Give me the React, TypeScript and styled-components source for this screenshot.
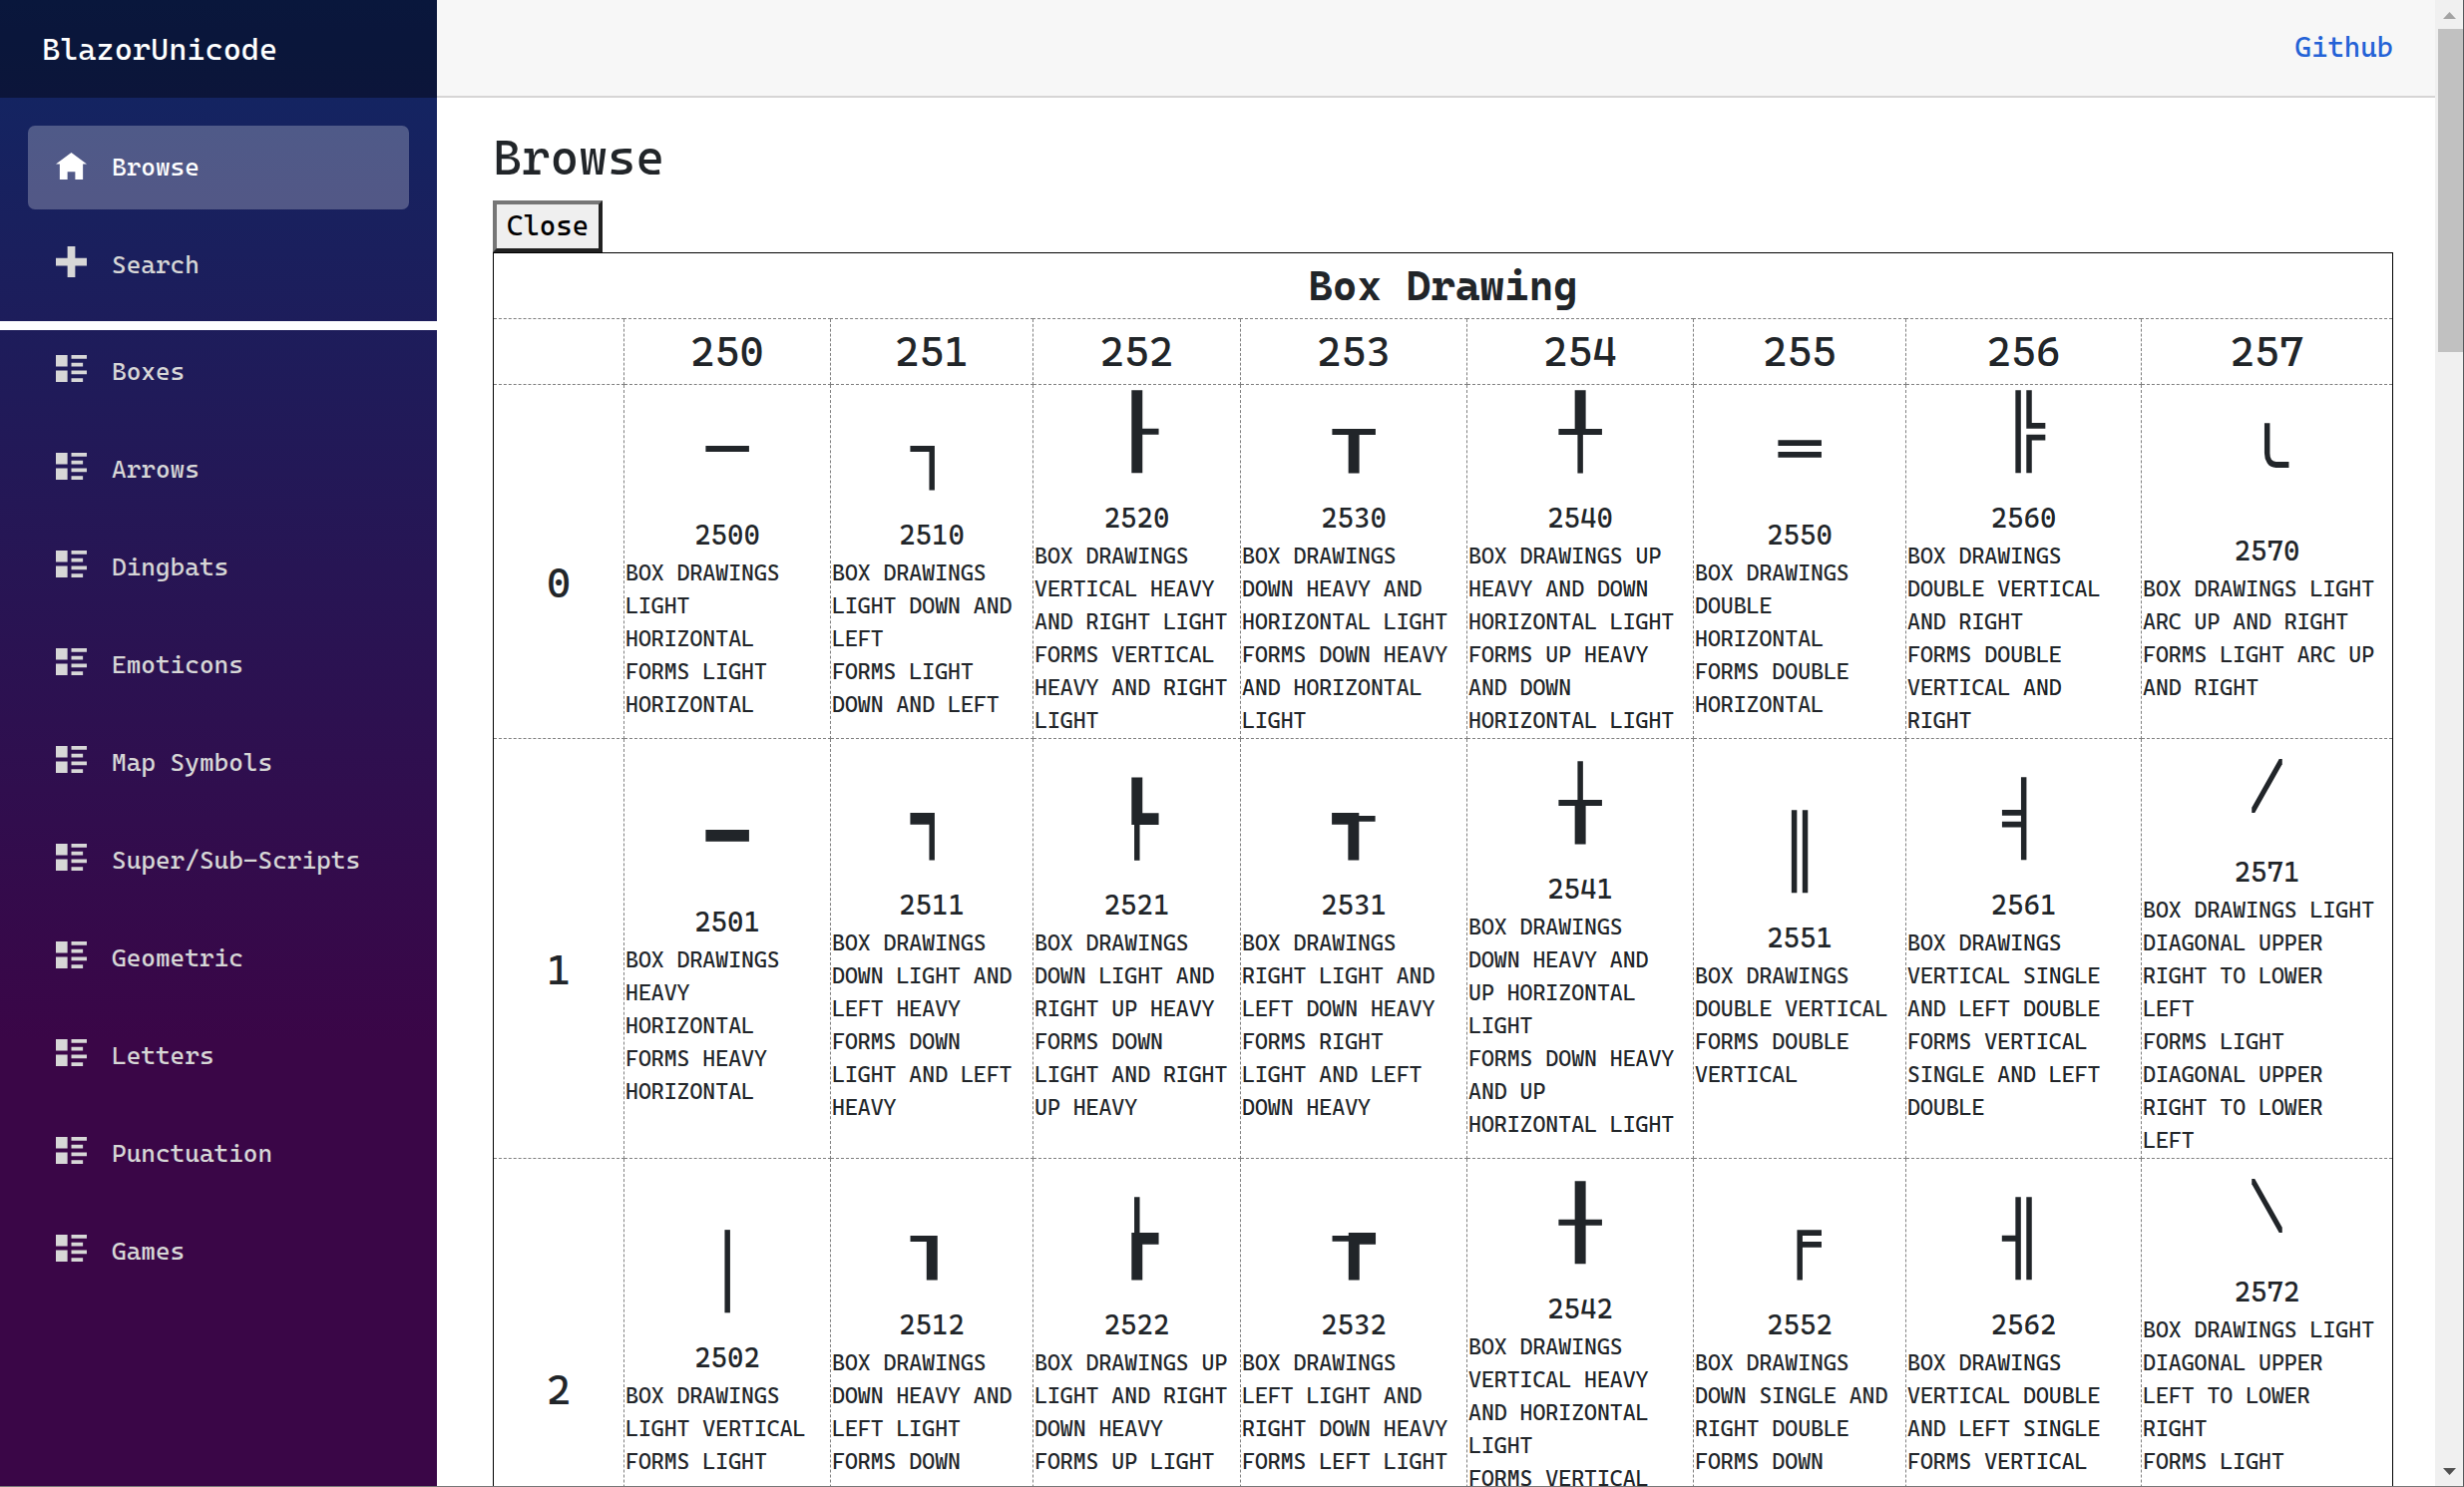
import React from "react";
import styled, { createGlobalStyle } from "styled-components";

const mono = `"Cascadia Code", "DejaVu Sans Mono", "Liberation Mono", monospace`;

const GlobalStyle = createGlobalStyle`
  *, *::before, *::after { box-sizing: border-box; }
  body {
    margin: 0;
    background: #fff;
    color: #212529;
    font-family: ${mono};
    font-size: 28px;
    font-weight: 400;
    line-height: 42px;
  }
`;

const Window = styled.div`
  display: flex;
  height: 100vh;
  overflow: hidden;
  border-right: 1px solid #56595c;
  border-bottom: 1px solid #777;
`;

const Sidebar = styled.aside`
  flex: 0 0 438px;
  background-image: linear-gradient(180deg, #102764 0%, #3a0647 70%);
`;

const Brand = styled.a`
  display: flex;
  align-items: center;
  height: 98px;
  padding: 0 42px;
  background: rgba(0, 0, 0, 0.4);
  color: #fff;
  font-size: 31px;
  text-decoration: none;
`;

const NavGroup = styled.ul`
  list-style: none;
  margin: 0;
  padding: 0 28px;
`;

const MainNav = styled(NavGroup)`
  padding-top: 28px;
  border-bottom: 9px solid #fff;
`;

const NavItem = styled.li`
  padding-bottom: 14px;
`;

const NavLink = styled.a<{ $active?: boolean }>`
  display: flex;
  align-items: center;
  height: 84px;
  padding: 0 28px;
  border-radius: 7px;
  background: ${(p) => (p.$active ? "rgba(255, 255, 255, 0.25)" : "transparent")};
  color: ${(p) => (p.$active ? "#fff" : "#d7d7d7")};
  font-size: 25px;
  text-decoration: none;
  white-space: nowrap;
`;

const Icon = styled.svg`
  flex: none;
  width: 31px;
  height: 31px;
  margin: 0 25px 7px 0;
  fill: currentColor;
`;

const Main = styled.main`
  flex: 1;
  min-width: 0;
`;

const TopBar = styled.header`
  display: flex;
  align-items: center;
  justify-content: flex-end;
  height: 98px;
  padding: 0 42px 0 56px;
  background: #f7f7f7;
  border-bottom: 2px solid #d6d5d5;
`;

const TopLink = styled.a`
  color: #2462d6;
  text-decoration: none;
`;

const Content = styled.div`
  padding: 31px 42px 0 56px;
`;

const Title = styled.h1`
  margin: 0 0 14px;
  font-size: 49px;
  font-weight: 400;
  line-height: 58px;
`;

const CloseButton = styled.button`
  display: block;
  height: 52px;
  padding: 0 10px;
  border: 4px solid;
  border-color: #767676 #212121 #212121 #767676;
  border-radius: 0;
  background: #efefef;
  color: #000;
  font: inherit;
`;

const Table = styled.table`
  width: 100%;
  table-layout: fixed;
  border-collapse: collapse;
  border: 1px solid #000;

  th, td {
    padding: 1px;
    border: 1px dashed #808080;
  }
`;

const Caption = styled.th`
  font-size: 42px;
  line-height: 63px;
`;

const ColumnHead = styled.th`
  font-size: 42px;
  font-weight: 400;
  line-height: 63px;
`;

const RowHead = styled(ColumnHead)`
  && { padding-top: 43px; }
`;

const Glyph = styled.div<{ $diagonal: boolean }>`
  height: 112px;
  font-family: ${(p) => (p.$diagonal ? mono : `"DejaVu Sans Mono", monospace`)};
  font-size: ${(p) => (p.$diagonal ? 52 : 70)}px;
  line-height: 92px;
  text-align: center;
`;

const Code = styled.div`
  text-align: center;
`;

const Name = styled.div`
  padding-right: 7px;
  font-size: 22px;
  line-height: 33px;
`;

const ScrollTrack = styled.div`
  flex: 0 0 28px;
  display: flex;
  flex-direction: column;
  align-items: center;
  background: #f0f0f0;
`;

const ScrollArrow = styled.svg<{ $color: string }>`
  flex: none;
  width: 28px;
  height: 29px;
  fill: ${(p) => p.$color};
`;

const ScrollThumb = styled.div`
  flex: none;
  width: 25px;
  height: 324px;
  margin: 0 0 auto 2px;
  background: #c1c1c1;
`;

const icons = {
  home: { box: "0 -1 8 8", d: "M4 0l-4 3h1v4h2v-2h2v2h2v-4.03l1 .03-4-3z" },
  plus: { box: "0 0 8 8", d: "M3 0v3h-3v2h3v3h2v-3h3v-2h-3v-3h-2z" },
  list: {
    box: "0 -0.5 8 8",
    d: "M0 0v3h3v-3h-3zm4 0v1h4v-1h-4zm0 2v1h3v-1h-3zm-4 2v3h3v-3h-3zm4 0v1h4v-1h-4zm0 2v1h3v-1h-3z",
  },
};

function NavEntry({ icon, label, active }: { icon: keyof typeof icons; label: string; active?: boolean }) {
  return (
    <NavItem>
      <NavLink href="#" $active={active} aria-current={active ? "page" : undefined}>
        <Icon viewBox={icons[icon].box} aria-hidden="true">
          <path d={icons[icon].d} />
        </Icon>
        {label}
      </NavLink>
    </NavItem>
  );
}

const blocks = [
  "Boxes",
  "Arrows",
  "Dingbats",
  "Emoticons",
  "Map Symbols",
  "Super/Sub-Scripts",
  "Geometric",
  "Letters",
  "Punctuation",
  "Games",
];

const columnWidths = [131, 207, 203, 208, 227, 227, 213, 236, 252];
const columns = ["250", "251", "252", "253", "254", "255", "256", "257"];

const rows: string[][] = [
  [
    "LIGHT HORIZONTAL",
    "LIGHT DOWN AND LEFT",
    "VERTICAL HEAVY AND RIGHT LIGHT",
    "DOWN HEAVY AND HORIZONTAL LIGHT",
    "UP HEAVY AND DOWN HORIZONTAL LIGHT",
    "DOUBLE HORIZONTAL",
    "DOUBLE VERTICAL AND RIGHT",
    "LIGHT ARC UP AND RIGHT",
  ],
  [
    "HEAVY HORIZONTAL",
    "DOWN LIGHT AND LEFT HEAVY",
    "DOWN LIGHT AND RIGHT UP HEAVY",
    "RIGHT LIGHT AND LEFT DOWN HEAVY",
    "DOWN HEAVY AND UP HORIZONTAL LIGHT",
    "DOUBLE VERTICAL",
    "VERTICAL SINGLE AND LEFT DOUBLE",
    "LIGHT DIAGONAL UPPER RIGHT TO LOWER LEFT",
  ],
  [
    "LIGHT VERTICAL",
    "DOWN HEAVY AND LEFT LIGHT",
    "UP LIGHT AND RIGHT DOWN HEAVY",
    "LEFT LIGHT AND RIGHT DOWN HEAVY",
    "VERTICAL HEAVY AND HORIZONTAL LIGHT",
    "DOWN SINGLE AND RIGHT DOUBLE",
    "VERTICAL DOUBLE AND LEFT SINGLE",
    "LIGHT DIAGONAL UPPER LEFT TO LOWER RIGHT",
  ],
];

export default function App() {
  return (
    <>
      <GlobalStyle />
      <Window>
        <Sidebar>
          <Brand href="#">BlazorUnicode</Brand>
          <nav>
            <MainNav>
              <NavEntry icon="home" label="Browse" active />
              <NavEntry icon="plus" label="Search" />
            </MainNav>
            <NavGroup>
              {blocks.map((label) => (
                <NavEntry key={label} icon="list" label={label} />
              ))}
            </NavGroup>
          </nav>
        </Sidebar>
        <Main>
          <TopBar>
            <TopLink href="#">Github</TopLink>
          </TopBar>
          <Content>
            <Title>Browse</Title>
            <CloseButton type="button">Close</CloseButton>
            <Table>
              <colgroup>
                {columnWidths.map((width, i) => (
                  <col key={i} width={width} />
                ))}
              </colgroup>
              <thead>
                <tr>
                  <Caption colSpan={9}>Box Drawing</Caption>
                </tr>
                <tr>
                  <td />
                  {columns.map((c) => (
                    <ColumnHead key={c} scope="col">{c}</ColumnHead>
                  ))}
                </tr>
              </thead>
              <tbody>
                {rows.map((names, r) => (
                  <tr key={r}>
                    <RowHead scope="row">{r}</RowHead>
                    {names.map((name, c) => {
                      const code = columns[c] + r;
                      return (
                        <td key={code}>
                          <Glyph $diagonal={name.includes("DIAGONAL")}>
                            {String.fromCodePoint(parseInt(code, 16))}
                          </Glyph>
                          <Code>{code}</Code>
                          <Name>{`BOX DRAWINGS ${name}`}</Name>
                          <Name>{`FORMS ${name}`}</Name>
                        </td>
                      );
                    })}
                  </tr>
                ))}
              </tbody>
            </Table>
          </Content>
        </Main>
        <ScrollTrack aria-hidden="true">
          <ScrollArrow viewBox="0 0 28 29" $color="#a3a3a3">
            <path d="M8 19l6.500-7 6.500 7z" />
          </ScrollArrow>
          <ScrollThumb />
          <ScrollArrow viewBox="0 0 28 29" $color="#505050">
            <path d="M8 11l6.500 7 6.500-7z" />
          </ScrollArrow>
        </ScrollTrack>
      </Window>
    </>
  );
}
